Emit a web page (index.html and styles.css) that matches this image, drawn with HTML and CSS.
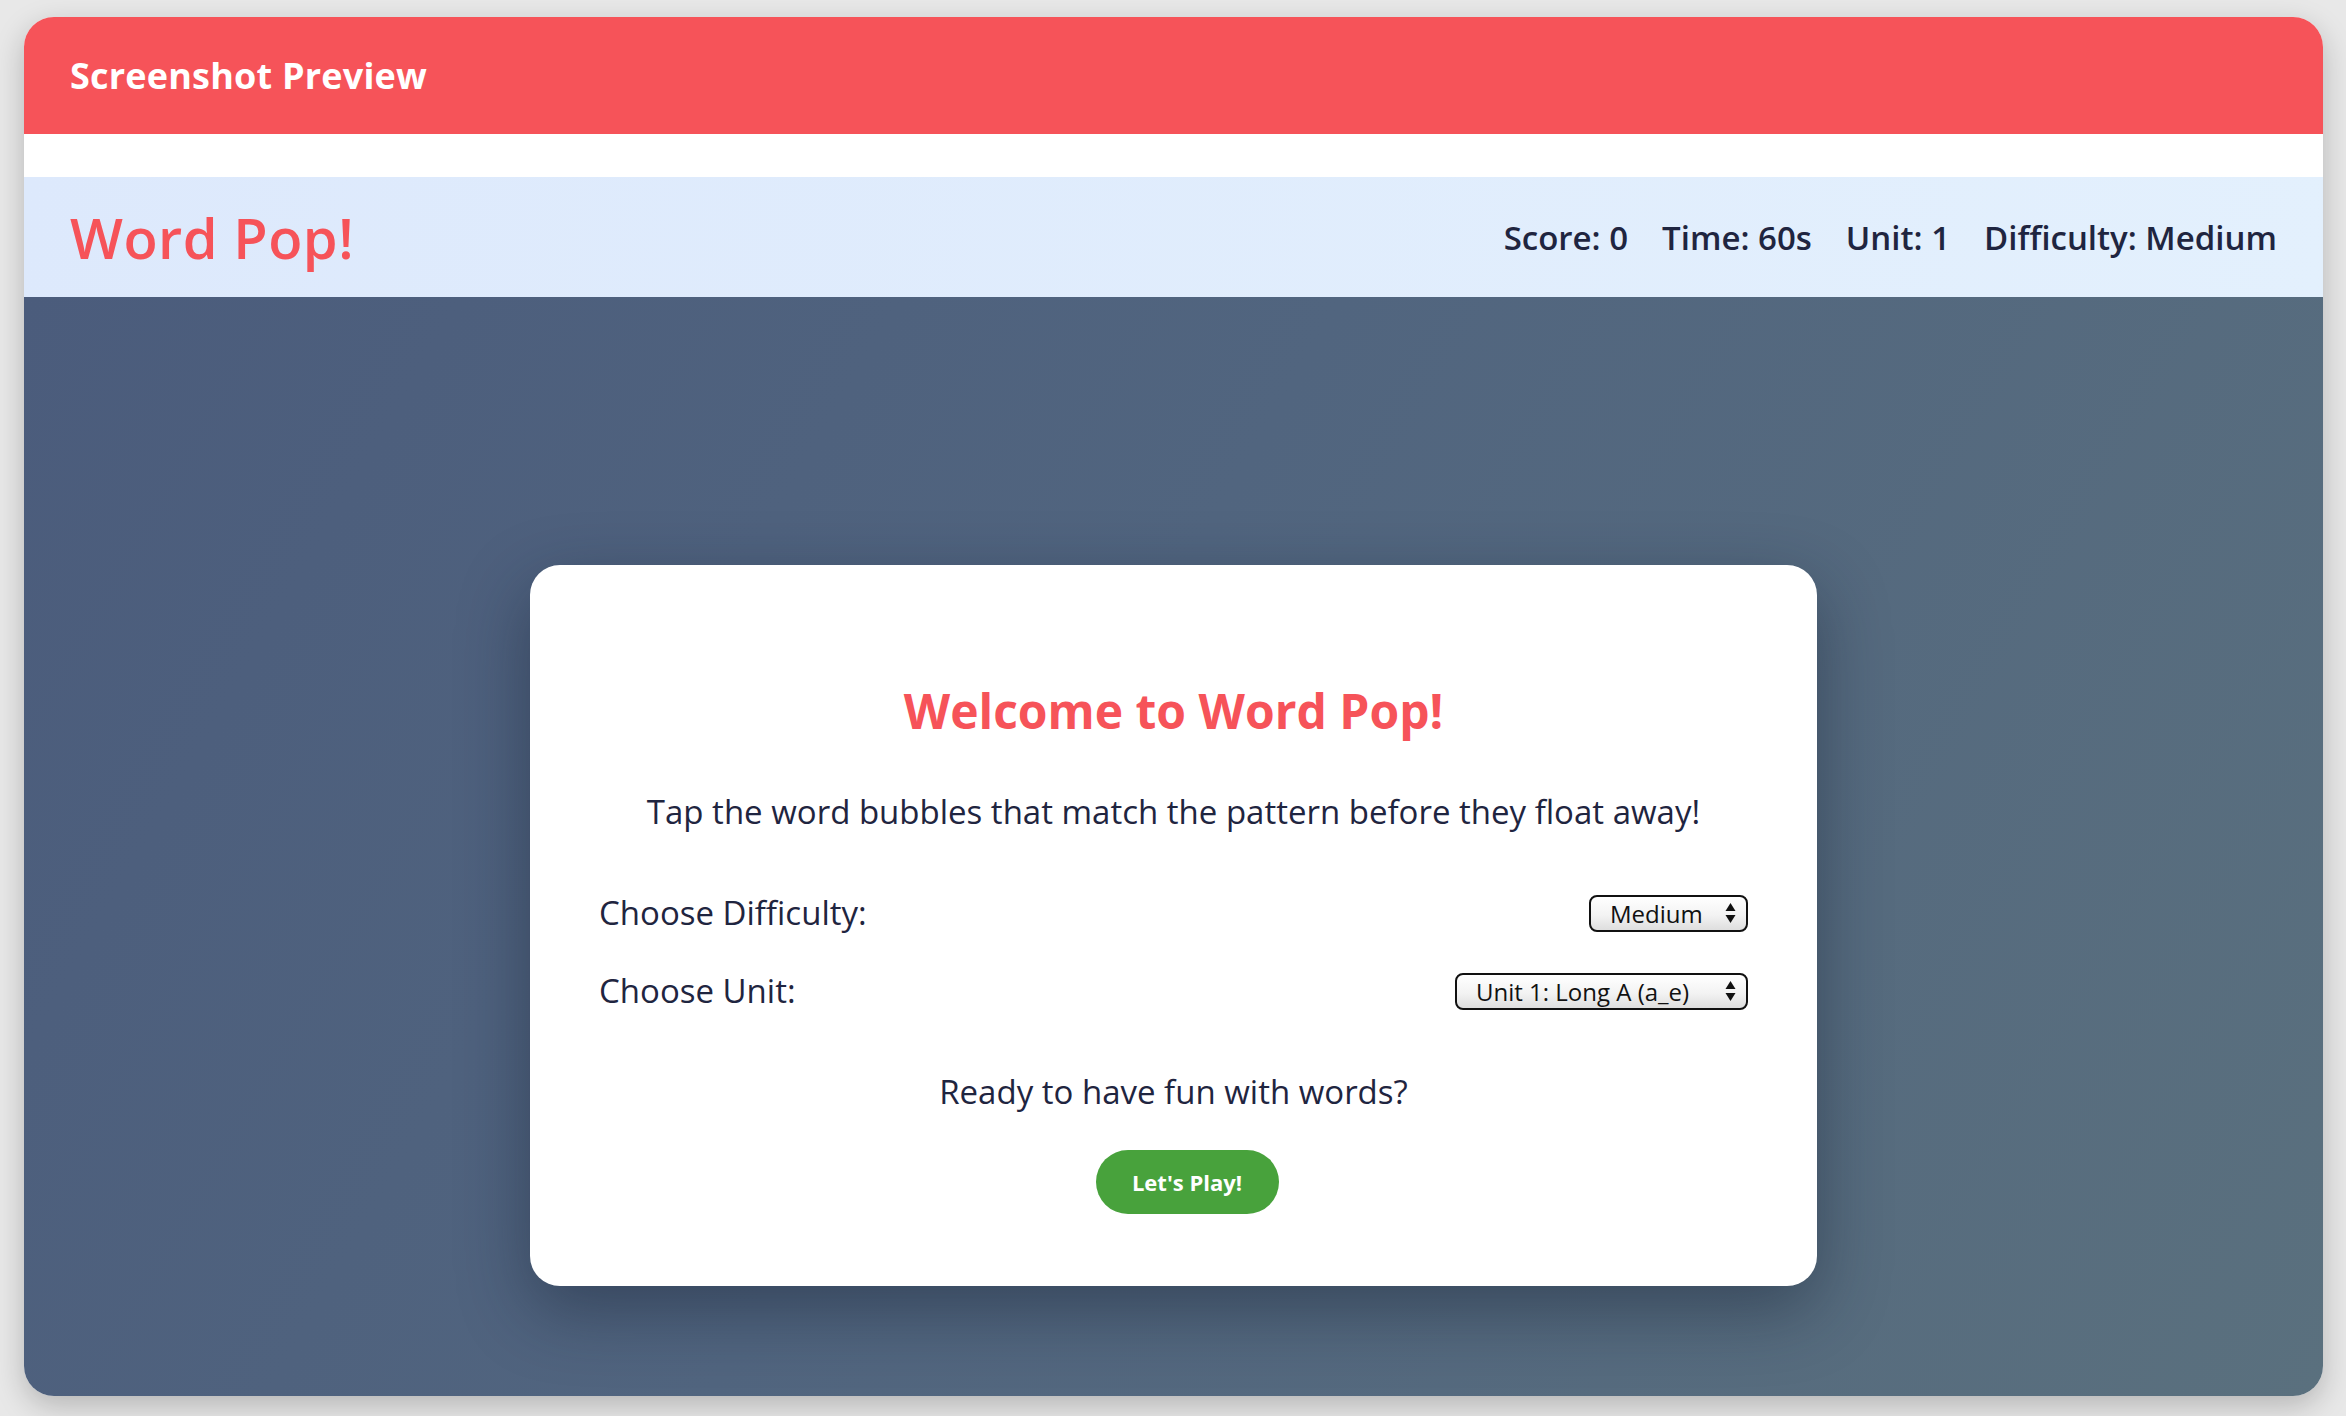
FILE: index.html
```html
<!DOCTYPE html>
<html lang="en">
<head>
<meta charset="utf-8">
<title>Word Pop!</title>
<link rel="stylesheet" href="styles.css">
</head>
<body>
<div class="window">
  <header class="titlebar">Screenshot Preview</header>
  <div class="spacer"></div>
  <div class="gamebar">
    <h1 class="logo">Word Pop!</h1>
    <div class="stats">
      <span>Score: 0</span>
      <span>Time: 60s</span>
      <span>Unit: 1</span>
      <span>Difficulty: Medium</span>
    </div>
  </div>
  <main class="stage">
    <section class="card">
      <h2 class="card-title">Welcome to Word Pop!</h2>
      <p class="intro">Tap the word bubbles that match the pattern before they float away!</p>
      <div class="field">
        <label class="field-label" for="diff">Choose Difficulty:</label>
        <span class="select-wrap">
          <select id="diff" class="select select-diff"><option>Medium</option></select>
          <svg class="arrows" viewBox="0 0 11 22" width="11" height="22"><path d="M5.5 1 L10.5 9 H0.5 Z M5.5 21 L10.5 13 H0.5 Z" fill="#111"/></svg>
        </span>
      </div>
      <div class="field">
        <label class="field-label" for="unit">Choose Unit:</label>
        <span class="select-wrap">
          <select id="unit" class="select select-unit"><option>Unit 1: Long A (a_e)</option></select>
          <svg class="arrows" viewBox="0 0 11 22" width="11" height="22"><path d="M5.5 1 L10.5 9 H0.5 Z M5.5 21 L10.5 13 H0.5 Z" fill="#111"/></svg>
        </span>
      </div>
      <p class="ready">Ready to have fun with words?</p>
      <button class="play" type="button">Let's Play!</button>
    </section>
  </main>
</div>
</body>
</html>
```

FILE: styles.css
```css
* { box-sizing: border-box; }

html, body { height: 100%; }

body {
  margin: 0;
  padding: 17px 23px 20px 24px;
  background: #e8e8e8;
  font-family: "Open Sans", "DejaVu Sans", sans-serif;
  color: #1f2540;
}

.window {
  height: 100%;
  display: flex;
  flex-direction: column;
  border-radius: 30px;
  overflow: hidden;
  background: #ffffff;
  box-shadow: 0 10px 30px rgba(0, 0, 0, 0.22);
}

.titlebar {
  height: 117px;
  flex: none;
  display: flex;
  align-items: center;
  padding: 0 46px;
  background: #f65359;
  color: #ffffff;
  font-size: 36px;
  font-weight: 700;
  letter-spacing: 0.2px;
}

.spacer {
  height: 43px;
  flex: none;
  background: #ffffff;
}

.gamebar {
  height: 120px;
  flex: none;
  display: flex;
  align-items: center;
  justify-content: space-between;
  padding: 0 46px;
  background: linear-gradient(100deg, #dde9fc 0%, #e3f0fd 100%);
}

.logo {
  margin: 0;
  font-size: 56px;
  font-weight: 600;
  color: #f65359;
  letter-spacing: 0.5px;
}

.stats {
  display: flex;
  gap: 34px;
  font-size: 33px;
  font-weight: 600;
  color: #1f2540;
}

.stage {
  flex: 1;
  display: flex;
  justify-content: center;
  align-items: flex-start;
  padding-top: 268px;
  background: linear-gradient(120deg, #4b5c7c 0%, #51657f 45%, #5a707e 100%);
}

.card {
  width: 1287px;
  padding: 64px 69px 72px;
  background: #ffffff;
  border-radius: 30px;
  box-shadow: 0 24px 70px rgba(20, 30, 50, 0.45);
  display: flex;
  flex-direction: column;
  align-items: center;
}

.card-title {
  margin: 50px 0 0;
  font-size: 48px;
  line-height: 64px;
  font-weight: 700;
  color: #f65359;
}

.intro {
  margin: 46px 0 0;
  font-size: 33px;
  line-height: 46px;
  color: #1f2540;
}

.field {
  align-self: stretch;
  display: flex;
  justify-content: space-between;
  align-items: center;
  margin-top: 55px;
}

.field + .field {
  margin-top: 32px;
}

.field-label {
  font-size: 33px;
  line-height: 46px;
  color: #1f2540;
}

.select-wrap {
  position: relative;
  display: inline-flex;
}

.select {
  appearance: none;
  -webkit-appearance: none;
  height: 37px;
  padding: 0 44px 0 19px;
  border: 2px solid #111111;
  border-radius: 8px;
  background: linear-gradient(180deg, #ffffff 0%, #f3f3f3 55%, #dedede 100%);
  font-family: "Open Sans", "DejaVu Sans", sans-serif;
  font-size: 24px;
  color: #111111;
}

.select-diff { width: 159px; }
.select-unit { width: 293px; }

.arrows {
  position: absolute;
  right: 12px;
  top: 7px;
  pointer-events: none;
}

.ready {
  margin: 55px 0 0;
  font-size: 33px;
  line-height: 46px;
  color: #1f2540;
}

.play {
  margin: 35px 0 0 27px;
  width: 183px;
  height: 64px;
  border: 0;
  border-radius: 32px;
  background: #48a23c;
  color: #ffffff;
  font-family: "Open Sans", "DejaVu Sans", sans-serif;
  font-size: 22px;
  font-weight: 700;
}
```
